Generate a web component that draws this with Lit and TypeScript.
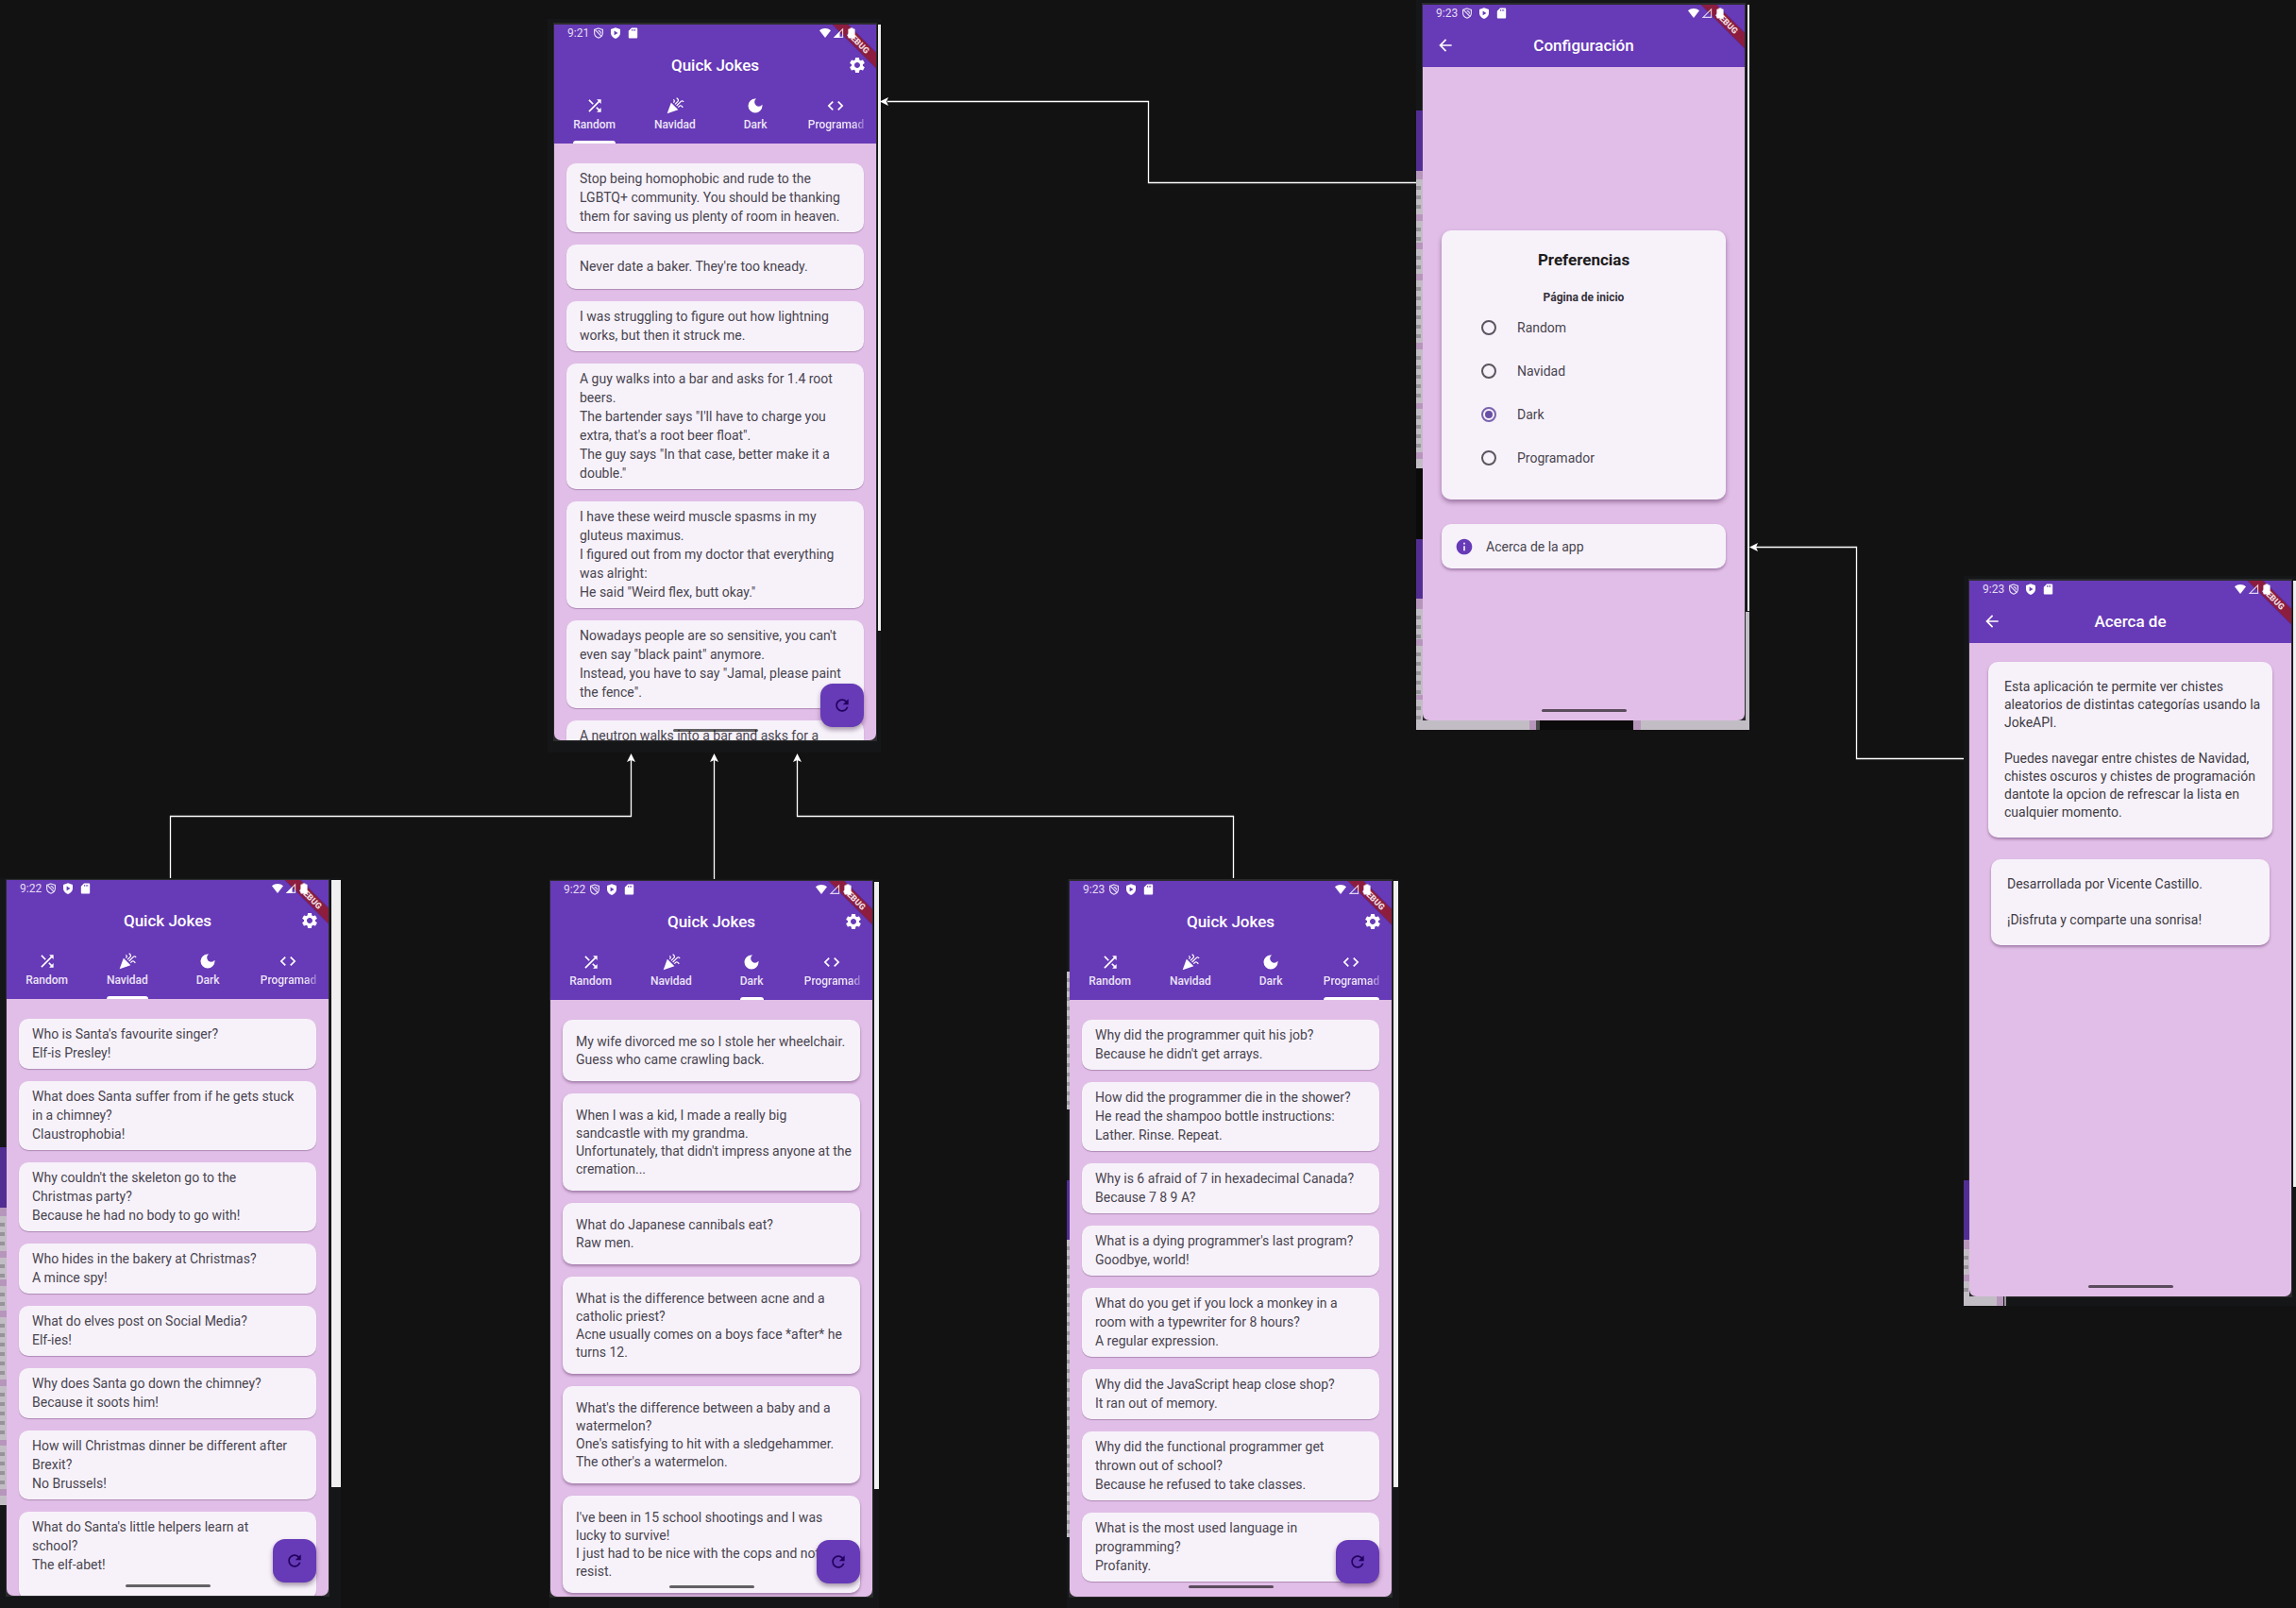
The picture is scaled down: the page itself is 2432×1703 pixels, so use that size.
import { LitElement, html, svg, css, nothing } from "lit";
import { customElement, property } from "lit/decorators.js";
import { classMap } from "lit/directives/class-map.js";
import { styleMap } from "lit/directives/style-map.js";

const PATHS: Record<string, string> = {
  shuffle:
    "M10.59 9.17L5.41 4 4 5.41l5.17 5.17 1.42-1.41zM14.5 4l2.04 2.04L4 18.59 5.41 20 17.96 7.46 20 9.5V4h-5.5zm.33 9.41l-1.41 1.41 3.13 3.13L14.5 20H20v-5.5l-2.04 2.04-3.13-3.13z",
  celebration:
    "M2 22l14-5-9-9zM14.53 12.53l5.59-5.59c.49-.49 1.28-.49 1.77 0l.59.59 1.06-1.06-.59-.59c-1.07-1.07-2.82-1.07-3.89 0l-5.59 5.59 1.06 1.06zM10.06 6.88l-.59.59 1.06 1.06.59-.59c1.07-1.07 1.07-2.82 0-3.89l-.59-.59-1.06 1.07.59.59c.48.48.48 1.28 0 1.76zM17.06 11.88l-1.59 1.59 1.06 1.06 1.59-1.59c.49-.49 1.28-.49 1.77 0l1.61 1.61 1.06-1.06-1.61-1.61c-1.08-1.07-2.82-1.07-3.89 0zM15.06 5.88l-3.59 3.59 1.06 1.06 3.59-3.59c1.07-1.07 1.07-2.82 0-3.89l-1.59-1.59-1.06 1.06 1.59 1.59c.48.49.48 1.29 0 1.77z",
  dark: "M12 3a9 9 0 1 0 9 9c0-.46-.04-.92-.1-1.36a5.389 5.389 0 0 1-4.4 2.26 5.403 5.403 0 0 1-3.14-9.8c-.44-.06-.9-.1-1.36-.1z",
  code: "M9.4 16.6L4.8 12l4.6-4.6L8 6l-6 6 6 6 1.4-1.4zm5.2 0l4.6-4.6-4.6-4.6L16 6l6 6-6 6-1.4-1.4z",
  settings:
    "M19.14 12.94c.04-.3.06-.61.06-.94 0-.32-.02-.64-.07-.94l2.03-1.58c.18-.14.23-.41.12-.61l-1.92-3.32c-.12-.22-.37-.29-.59-.22l-2.39.96c-.5-.38-1.03-.7-1.62-.94l-.36-2.54c-.04-.24-.24-.41-.48-.41h-3.84c-.24 0-.43.17-.47.41l-.36 2.54c-.59.24-1.13.57-1.62.94l-2.39-.96c-.22-.08-.47 0-.59.22L2.74 8.87c-.12.21-.08.47.12.61l2.03 1.58c-.05.3-.09.63-.09.94s.02.64.07.94l-2.03 1.58c-.18.14-.23.41-.12.61l1.92 3.32c.12.22.37.29.59.22l2.39-.96c.5.38 1.03.7 1.62.94l.36 2.54c.05.24.24.41.48.41h3.84c.24 0 .44-.17.47-.41l.36-2.54c.59-.24 1.13-.56 1.62-.94l2.39.96c.22.08.47 0 .59-.22l1.92-3.32c.12-.22.07-.47-.12-.61l-2.01-1.58zM12 15.6c-1.98 0-3.6-1.62-3.6-3.6s1.62-3.6 3.6-3.6 3.6 1.62 3.6 3.6-1.62 3.6-3.6 3.6z",
  back: "M20 11H7.83l5.59-5.59L12 4l-8 8 8 8 1.41-1.41L7.83 13H20v-2z",
  refresh:
    "M17.65 6.35C16.2 4.9 14.21 4 12 4c-4.42 0-7.99 3.58-7.99 8s3.57 8 7.99 8c3.73 0 6.84-2.55 7.73-6h-2.08c-.82 2.33-3.04 4-5.65 4-3.31 0-6-2.69-6-6s2.69-6 6-6c1.66 0 3.14.69 4.22 1.78L13 11h7V4l-2.35 2.35z",
  info: "M12 2C6.48 2 2 6.48 2 12s4.48 10 10 10 10-4.48 10-10S17.52 2 12 2zm1 15h-2v-6h2v6zm0-8h-2V7h2v2z",
};

const icon = (name: string) => html`
  <svg class="icon" viewBox="0 0 24 24" aria-hidden="true"><path d=${PATHS[name]}></path></svg>
`;

const TABS = [
  { id: "random", label: "Random", icon: "shuffle" },
  { id: "navidad", label: "Navidad", icon: "celebration" },
  { id: "dark", label: "Dark", icon: "dark" },
  { id: "programador", label: "Programador", icon: "code" },
];

const JOKES: Record<string, string[]> = {
  random: [
    "Stop being homophobic and rude to the LGBTQ+ community. You should be thanking them for saving us plenty of room in heaven.",
    "Never date a baker. They're too kneady.",
    "I was struggling to figure out how lightning works, but then it struck me.",
    "A guy walks into a bar and asks for 1.4 root beers.\nThe bartender says \"I'll have to charge you extra, that's a root beer float\".\nThe guy says \"In that case, better make it a double.\"",
    "I have these weird muscle spasms in my gluteus maximus.\nI figured out from my doctor that everything was alright:\nHe said \"Weird flex, butt okay.\"",
    "Nowadays people are so sensitive, you can't even say \"black paint\" anymore.\nInstead, you have to say \"Jamal, please paint the fence\".",
    "A neutron walks into a bar and asks for a",
  ],
  navidad: [
    "Who is Santa's favourite singer?\nElf-is Presley!",
    "What does Santa suffer from if he gets stuck in a chimney?\nClaustrophobia!",
    "Why couldn't the skeleton go to the Christmas party?\nBecause he had no body to go with!",
    "Who hides in the bakery at Christmas?\nA mince spy!",
    "What do elves post on Social Media?\nElf-ies!",
    "Why does Santa go down the chimney?\nBecause it soots him!",
    "How will Christmas dinner be different after Brexit?\nNo Brussels!",
    "What do Santa's little helpers learn at school?\nThe elf-abet!",
  ],
  dark: [
    "My wife divorced me so I stole her wheelchair.\nGuess who came crawling back.",
    "When I was a kid, I made a really big\nsandcastle with my grandma.\nUnfortunately, that didn't impress anyone at the cremation...",
    "What do Japanese cannibals eat?\nRaw men.",
    "What is the difference between acne and a catholic priest?\nAcne usually comes on a boys face *after* he turns 12.",
    "What's the difference between a baby and a watermelon?\nOne's satisfying to hit with a sledgehammer. The other's a watermelon.",
    "I've been in 15 school shootings and I was\nlucky to survive!\nI just had to be nice with the cops and not resist.",
  ],
  programador: [
    "Why did the programmer quit his job?\nBecause he didn't get arrays.",
    "How did the programmer die in the shower?\nHe read the shampoo bottle instructions: Lather. Rinse. Repeat.",
    "Why is 6 afraid of 7 in hexadecimal Canada?\nBecause 7 8 9 A?",
    "What is a dying programmer's last program?\nGoodbye, world!",
    "What do you get if you lock a monkey in a room with a typewriter for 8 hours?\nA regular expression.",
    "Why did the JavaScript heap close shop?\nIt ran out of memory.",
    "Why did the functional programmer get thrown out of school?\nBecause he refused to take classes.",
    "What is the most used language in programming?\nProfanity.",
  ],
};

/* Lists whose last card runs past the lower edge of the screen. */
const OPEN_ENDED = new Set(["random", "navidad"]);

@customElement("phone-screen")
export class PhoneScreen extends LitElement {
  @property() view = "random";
  @property() time = "9:21";
  @property({ type: Boolean }) signal = false;

  static styles = css`
    :host {
      display: flex;
      flex-direction: column;
      position: relative;
      box-sizing: border-box;
      width: 341px;
      height: 758px;
      overflow: hidden;
      border-radius: 0 0 7px 7px;
      background: #e1bee7;
      color: #49454f;
      font: 400 14px/20px Roboto, "Liberation Sans", sans-serif;
    }
    button {
      margin: 0;
      padding: 0;
      border: 0;
      background: none;
      color: inherit;
      font: inherit;
      cursor: pointer;
    }
    .icon {
      display: block;
      width: 20px;
      height: 20px;
      fill: currentColor;
      flex: none;
    }
    .header {
      flex: none;
      background: #673ab7;
      color: #fff;
    }
    .banner {
      position: absolute;
      top: 0;
      right: 0;
      width: 60px;
      height: 60px;
    }
    .banner text {
      font: 900 9px Roboto, sans-serif;
      fill: #fff;
      fill-opacity: 0.85;
    }
    .status {
      position: relative;
      display: flex;
      align-items: flex-start;
      height: 20px;
      padding: 0 20px 0 14px;
      font-size: 12px;
      line-height: 18px;
      color: #e4dcf2;
    }
    .status-icons {
      display: flex;
      align-items: center;
      gap: 6px;
      height: 18px;
      padding-left: 4px;
      flex: 1;
    }
    .status-icons.end {
      justify-content: flex-end;
      gap: 2px;
    }
    .status svg {
      display: block;
      width: 12px;
      height: 12px;
    }
    .bar {
      display: grid;
      grid-template-columns: 48px 1fr 48px;
      align-items: center;
      height: 46px;
    }
    .bar button {
      justify-self: center;
    }
    .bar button.gear {
      justify-self: end;
      margin-right: 10px;
    }
    h2 {
      grid-column: 2;
      margin: 0;
      text-align: center;
      font-size: 17px;
      font-weight: 500;
      line-height: 20px;
    }
    .tabs {
      display: grid;
      grid-template-columns: repeat(4, 1fr);
    }
    .tab {
      display: flex;
      justify-content: center;
      height: 60px;
      padding: 0 13px;
      font-size: 12px;
      font-weight: 500;
      line-height: 20px;
      min-width: 0;
      color: #ece4f6;
    }
    .tab-inner {
      display: flex;
      flex-direction: column;
      height: 60px;
      padding-top: 10px;
      box-sizing: border-box;
      max-width: 100%;
      min-width: 0;
    }
    .tab-inner .icon {
      align-self: center;
      color: #fff;
    }
    .tab-label {
      overflow: hidden;
      white-space: nowrap;
      text-align: left;
    }
    .tab-label.fade {
      mask-image: linear-gradient(to right, #000 48px, transparent 64px);
    }
    .indicator {
      height: 3px;
      margin-top: auto;
      border-radius: 3px 3px 0 0;
    }
    .selected .indicator {
      background: #fff;
    }
    .list {
      display: flex;
      flex-direction: column;
      gap: 13px;
      flex: 1;
      min-height: 0;
      margin: 0;
      padding: 21px 13px 0;
      list-style: none;
    }
    .joke {
      display: flex;
      align-items: center;
      flex: none;
      box-sizing: border-box;
      min-height: 47px;
      padding: 6px 22px 7px 14px;
      border-radius: 10px;
      background: #f7f2fa;
      box-shadow: 0 1px 1px rgba(60, 20, 70, 0.3);
      white-space: pre-line;
    }
    .raised .joke {
      padding: 14px 4px 13px 14px;
      line-height: 19px;
      box-shadow: 0 2px 3px rgba(60, 20, 70, 0.38);
    }
    .open .joke:last-child {
      padding-bottom: 27px;
    }
    .fab {
      position: absolute;
      right: 13px;
      bottom: 14px;
      display: grid;
      place-items: center;
      width: 46px;
      height: 46px;
      border-radius: 13px;
      background: #673ab7;
      color: #21005d;
      box-shadow: 0 3px 5px rgba(40, 10, 50, 0.4);
    }
    .home {
      position: absolute;
      left: calc(50% - 45px);
      bottom: 9px;
      width: 90px;
      height: 3px;
      border-radius: 2px;
      background: rgba(0, 0, 0, 0.6);
    }
    .settings {
      display: flex;
      flex-direction: column;
      gap: 26px;
      padding: 173px 20px 0;
    }
    .about {
      display: flex;
      flex-direction: column;
      gap: 23px;
      padding: 20px 20px 0;
      color: #3f3b44;
    }
    .panel {
      margin: 0;
      border-radius: 10px;
      background: #f7f2fa;
      box-shadow: 0 3px 5px rgba(60, 20, 70, 0.42);
    }
    fieldset.panel {
      border: 0;
      min-width: 0;
      padding: 21px 0;
    }
    h3 {
      margin: 0 0 21px;
      text-align: center;
      font-size: 17px;
      font-weight: 700;
      line-height: 20px;
      color: #1d1b20;
    }
    .subtitle {
      margin: 0;
      text-align: center;
      font-size: 12px;
      font-weight: 700;
      line-height: 18px;
      color: #35313a;
    }
    .option {
      display: flex;
      align-items: center;
      gap: 22px;
      height: 46px;
      padding-left: 42px;
    }
    .option input {
      appearance: none;
      display: grid;
      place-items: center;
      box-sizing: border-box;
      width: 16px;
      height: 16px;
      margin: 0;
      border: 2px solid #5a5560;
      border-radius: 50%;
    }
    .option input:checked {
      border-color: #7a62ae;
    }
    .option input:checked::before {
      content: "";
      width: 8px;
      height: 8px;
      border-radius: 50%;
      background: #6750a4;
    }
    .link {
      display: flex;
      align-items: center;
      gap: 13px;
      height: 47px;
      padding: 0 14px;
      color: inherit;
      text-decoration: none;
      box-shadow: 0 2px 3px rgba(60, 20, 70, 0.38);
    }
    .link .icon {
      color: #673ab7;
    }
    .note {
      padding: 17px 8px 17px 17px;
      line-height: 19px;
      white-space: pre-line;
      box-shadow: 0 2px 3px rgba(60, 20, 70, 0.38);
    }
    .note.inset {
      margin: 0 3px;
    }
  `;

  private statusBar() {
    return html`
      <svg class="banner" viewBox="0 0 60 60" aria-hidden="true">
        <path d="M13 0H31L60 29V47Z" fill="#3a1670" fill-opacity="0.35"></path>
        <path d="M14 0H30L60 30V46Z" fill="#8c1d3f"></path>
        <text x="41" y="22" text-anchor="middle" transform="rotate(45 41 19)">DEBUG</text>
      </svg>
      <div class="status">
        <span>${this.time}</span>
        <span class="status-icons">
          <svg viewBox="0 0 12 12" aria-hidden="true" fill="none" stroke="#e4dcf2" stroke-width="1.2">
            <path d="M6 1L10.400 2.500V6c0 2.500-1.900 4.300-4.400 5.200C3.500 10.300 1.600 8.500 1.600 6V2.500Z"></path>
            <path d="M2.400 2.600L9.200 9.600M5.600 3.600c1.800-.2 3 1.200 2.700 3"></path>
          </svg>
          <svg viewBox="0 0 12 12" aria-hidden="true">
            <path
              fill="#fff"
              fill-rule="evenodd"
              d="M6 .2L11 2v4c0 2.800-2.100 4.900-5 5.900C3.100 10.900 1 8.800 1 6V2ZM4.600 3.500v4.800L8.500 5.900Z"
            ></path>
          </svg>
          <svg viewBox="0 0 12 12" aria-hidden="true">
            <path
              fill="#fff"
              fill-rule="evenodd"
              d="M5 .5h5.200a1 1 0 0 1 1 1v9a1 1 0 0 1-1 1H2.800a1 1 0 0 1-1-1V3.800ZM5.200 2h.8v1.700h-.8ZM6.800 2h.8v1.700h-.8ZM8.400 2h.8v1.700h-.8Z"
            ></path>
          </svg>
        </span>
        <span class="status-icons end">
          <svg viewBox="0 0 12 12" aria-hidden="true">
            <path fill="#fff" d="M0 3.200C3.500.2 8.500.2 12 3.200L6 11Z"></path>
          </svg>
          <svg viewBox="0 0 12 12" aria-hidden="true">
            <path fill="none" stroke="#fff" stroke-opacity="0.8" stroke-width="1.100" d="M10.600 1.800V10.400H2Z"></path>
            ${this.signal ? svg`<path fill="#fff" d="M7.500 4.500V10.900H1Z"></path>` : nothing}
          </svg>
          <svg viewBox="0 0 12 12" aria-hidden="true">
            <path
              fill="#fff"
              d="M4.500.4h3v1.200h1.300a.8.8 0 0 1 .8.8v8.400a.8.8 0 0 1-.8.800H3.200a.8.8 0 0 1-.8-.8V2.400a.8.8 0 0 1 .8-.8h1.300Z"
            ></path>
          </svg>
        </span>
      </div>
    `;
  }

  private tabBar() {
    return html`
      <div class="tabs" role="tablist">
        ${TABS.map(
          (tab) => html`
            <button
              class=${classMap({ tab: true, selected: tab.id === this.view })}
              role="tab"
              aria-selected=${tab.id === this.view ? "true" : "false"}
            >
              <span class="tab-inner">
                ${icon(tab.icon)}
                <span class=${classMap({ "tab-label": true, fade: tab.id === "programador" })}>${tab.label}</span>
                <span class="indicator"></span>
              </span>
            </button>
          `
        )}
      </div>
    `;
  }

  private jokesView() {
    return html`
      <header class="header">
        ${this.statusBar()}
        <div class="bar">
          <h2>Quick Jokes</h2>
          <button class="gear" aria-label="Configuración">${icon("settings")}</button>
        </div>
        ${this.tabBar()}
      </header>
      <ul class=${classMap({ list: true, raised: this.view === "dark", open: OPEN_ENDED.has(this.view) })}>
        ${JOKES[this.view].map((joke) => html`<li class="joke">${joke}</li>`)}
      </ul>
      <button class="fab" aria-label="Refrescar">${icon("refresh")}</button>
    `;
  }

  private subPage(title: string, body: unknown) {
    return html`
      <header class="header">
        ${this.statusBar()}
        <div class="bar">
          <button aria-label="Volver">${icon("back")}</button>
          <h2>${title}</h2>
        </div>
      </header>
      ${body}
    `;
  }

  private settingsView() {
    return this.subPage(
      "Configuración",
      html`
        <div class="settings">
          <fieldset class="panel" aria-labelledby="start-page">
            <h3>Preferencias</h3>
            <p class="subtitle" id="start-page">Página de inicio</p>
            ${TABS.map(
              (tab) => html`
                <label class="option">
                  <input type="radio" name="start" value=${tab.id} ?checked=${tab.id === "dark"} />
                  <span>${tab.label}</span>
                </label>
              `
            )}
          </fieldset>
          <a class="panel link" href="#acerca">${icon("info")}<span>Acerca de la app</span></a>
        </div>
      `
    );
  }

  private aboutView() {
    return this.subPage(
      "Acerca de",
      html`
        <div class="about">
          <p class="panel note">${"Esta aplicación te permite ver chistes aleatorios de distintas categorías usando la JokeAPI.\n\nPuedes navegar entre chistes de Navidad, chistes oscuros y chistes de programación dantote la opcion de refrescar la lista en cualquier momento."}</p>
          <p class="panel note inset">${"Desarrollada por Vicente Castillo.\n\n¡Disfruta y comparte una sonrisa!"}</p>
        </div>
      `
    );
  }

  render() {
    const content =
      this.view === "settings" ? this.settingsView() : this.view === "about" ? this.aboutView() : this.jokesView();
    return html`${content}<span class="home"></span>`;
  }
}

interface Node {
  view: string;
  time: string;
  signal: boolean;
  x: number;
  y: number;
}

const NODES: Node[] = [
  { view: "random", time: "9:21", signal: true, x: 587, y: 26 },
  { view: "settings", time: "9:23", signal: false, x: 1507, y: 5 },
  { view: "about", time: "9:23", signal: false, x: 2086, y: 615 },
  { view: "navidad", time: "9:22", signal: true, x: 7, y: 932 },
  { view: "dark", time: "9:22", signal: false, x: 583, y: 933 },
  { view: "programador", time: "9:23", signal: false, x: 1133, y: 933 },
];

const PURPLE = "#522e92";
const PINK = "#b796bc";
const GREY = "#c2bdc5";
const PAPER = "#f0f0f0";

type Rect = [number, number, number, number, string];

/* Window captures behind each screen: the plate, then whatever shows at its rim. */
const PLATES: Rect[] = [
  [580, 20, 353, 777, "#151617"],
  [586, 24, 343, 761, "#2b2b2d"],
  [930, 26, 3, 642, PAPER],
  [929, 26, 1, 758, "#111111"],
  [1500, 0, 353, 773, "#151617"],
  [1506, 3, 343, 761, "#2b2b2d"],
  [1851, 5, 2, 642, PAPER],
  [1849, 648, 4, 125, GREY],
  [1500, 763, 120, 10, GREY],
  [1620, 763, 7, 10, PINK],
  [1627, 763, 4, 10, "#4a494b"],
  [1631, 763, 99, 10, "#0b0b0b"],
  [1730, 763, 8, 10, PINK],
  [1738, 763, 115, 10, GREY],
  [2080, 610, 352, 773, "#151617"],
  [2085, 613, 343, 761, "#2b2b2d"],
  [2429, 615, 3, 642, PAPER],
  [2080, 1373, 35, 10, GREY],
  [2115, 1373, 7, 10, PINK],
  [2123, 1373, 2, 10, "#9a969c"],
  [0, 930, 361, 773, "#151617"],
  [6, 931, 343, 760, "#2b2b2d"],
  [351, 932, 10, 643, PAPER],
  [582, 931, 349, 772, "#151617"],
  [582, 932, 343, 760, "#2b2b2d"],
  [926, 934, 5, 643, PAPER],
  [1130, 931, 352, 772, "#151617"],
  [1132, 931, 343, 761, "#2b2b2d"],
  [1476, 933, 5, 642, PAPER],
];

/* Colour bands of a joke list seen edge-on, as [start, end, colour]. */
const LIST_BANDS: [number, number, string][] = [
  [117, 181, PURPLE],
  [181, 190, PINK],
  [190, 227, GREY],
  [227, 234, PINK],
  [234, 257, GREY],
  [257, 264, PINK],
  [264, 290, GREY],
  [290, 297, PINK],
  [297, 363, GREY],
  [363, 370, PINK],
  [370, 427, GREY],
  [427, 433, PINK],
  [433, 479, GREY],
  [479, 486, PINK],
  [486, 496, GREY],
];

const LOWER_BANDS: [number, number, string][] = [
  [496, 571, "#0b0b0b"],
  [571, 634, PURPLE],
  [634, 645, PINK],
  [645, 677, GREY],
  [677, 684, PINK],
  [684, 736, GREY],
  [736, 741, PINK],
  [741, 763, GREY],
];

@customElement("app-root")
export class AppRoot extends LitElement {
  static styles = css`
    :host {
      display: block;
      position: relative;
      min-height: 100vh;
      overflow: hidden;
      background: #121212;
    }
    .board {
      position: absolute;
      inset: 0;
      width: 100%;
      height: 100%;
    }
    .wire {
      fill: none;
      stroke: #fff;
      stroke-width: 1.3;
    }
    .head {
      fill: #fff;
    }
    .node {
      position: absolute;
    }
  `;

  private bands(x: number, width: number, offset: number, list: [number, number, string][]) {
    return list.map(([from, to, color]) => {
      const marks = [];
      if (color === GREY) {
        for (let y = from + 7; y < to - 4; y += 10) {
          marks.push(svg`<rect x=${x} y=${y + offset} width=${Math.min(5, width)} height="4" fill="#98939b"></rect>`);
        }
      }
      return svg`<rect x=${x} y=${from + offset} width=${width} height=${to - from} fill=${color}></rect>${marks}`;
    });
  }

  private arrow(x: number, y: number, turn: number) {
    return svg`<path class="head" d="M0 0L9 -4.500L7 0L9 4.500Z" transform="translate(${x} ${y}) rotate(${turn})"></path>`;
  }

  render() {
    return html`
      <svg class="board" aria-hidden="true">
        ${PLATES.map(([x, y, w, h, fill]) => svg`<rect x=${x} y=${y} width=${w} height=${h} fill=${fill}></rect>`)}
        ${this.bands(1500, 7, 0, LIST_BANDS)} ${this.bands(1500, 7, 0, LOWER_BANDS)}
        ${this.bands(0, 7, 1098, LIST_BANDS)}
        ${this.bands(2080, 6, 0, [
          [1250, 1313, PURPLE],
          [1313, 1323, PINK],
          [1323, 1350, GREY],
          [1350, 1357, PINK],
          [1357, 1373, GREY],
        ])}
        ${this.bands(1130, 3, 0, [
          [1029, 1175, GREY],
          [1250, 1313, PURPLE],
          [1313, 1628, GREY],
        ])}
        <path class="wire" d="M1500 193.500H1216.500V107.500H940"></path>
        <path class="wire" d="M2080 803.500H1966.500V579.500H1860"></path>
        <path class="wire" d="M180.500 930V864.500H668.500V804"></path>
        <path class="wire" d="M756.500 931V804"></path>
        <path class="wire" d="M1306.500 930V864.500H844.500V804"></path>
        ${this.arrow(932, 107.5, 0)} ${this.arrow(1853, 579.5, 0)} ${this.arrow(668.5, 798, 90)}
        ${this.arrow(756.5, 798, 90)} ${this.arrow(844.5, 798, 90)}
      </svg>
      ${NODES.map(
        (node) => html`
          <phone-screen
            class="node"
            style=${styleMap({ left: `${node.x}px`, top: `${node.y}px` })}
            view=${node.view}
            time=${node.time}
            ?signal=${node.signal}
          ></phone-screen>
        `
      )}
    `;
  }
}
